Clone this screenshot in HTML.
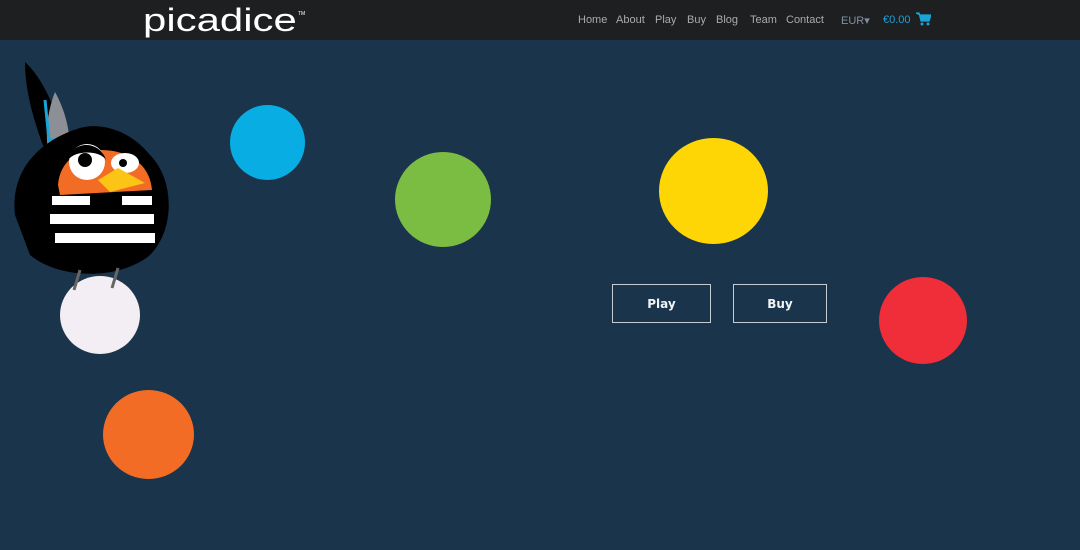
<!DOCTYPE html>
<html><head><meta charset="utf-8"><style>
*{margin:0;padding:0;box-sizing:border-box}
body{width:1080px;height:550px;background:#1a344b;overflow:hidden;position:relative;font-family:"Liberation Sans",sans-serif}
.nav{position:absolute;left:0;top:0;width:1080px;height:40px;background:#1d1f21}
.logo{position:absolute;left:143px;top:0px;color:#fff;font-family:"Liberation Sans",sans-serif;font-size:32px;line-height:40px;transform:scaleX(1.31);transform-origin:left}
.tm{position:absolute;left:298px;top:11px;font-size:5px;color:#fff}
.l{position:absolute;top:14px;font-size:11px;color:#a9abad;white-space:nowrap}
.c{position:absolute;border-radius:50%}
.btn{position:absolute;top:284px;height:39px;border:1.5px solid #c5cdd3;color:#f1f3f5;font-size:12px;font-weight:bold;display:flex;align-items:center;justify-content:center;font-family:"DejaVu Sans",sans-serif}
</style></head><body>
<div class="nav">
<div class="logo">picadice</div><div class="tm">TM</div>
<span class="l" style="left:578px">Home</span>
<span class="l" style="left:616px">About</span>
<span class="l" style="left:655px">Play</span>
<span class="l" style="left:687px">Buy</span>
<span class="l" style="left:716px">Blog</span>
<span class="l" style="left:750px">Team</span>
<span class="l" style="left:786px">Contact</span>
<span class="l" style="left:841px;color:#8290a0">EUR▾</span>
<span class="l" style="left:883px;color:#1aa3d9">€0.00</span>
<svg style="position:absolute;left:916px;top:12px" width="15" height="14" viewBox="0 0 15 14"><path d="M0 1h3l2 8h8l2-6H4z" fill="#1aa3d9" stroke="#1aa3d9" stroke-width="1.2"/><circle cx="6" cy="12" r="1.5" fill="#1aa3d9"/><circle cx="12" cy="12" r="1.5" fill="#1aa3d9"/></svg>
</div>
<div class="c" style="left:230px;top:105px;width:75px;height:75px;background:#08ade3"></div>
<div class="c" style="left:395px;top:152px;width:96px;height:95px;background:#7bbd42"></div>
<div class="c" style="left:659px;top:138px;width:109px;height:106px;background:#fed505"></div>
<div class="c" style="left:879px;top:277px;width:88px;height:87px;background:#ef2e39"></div>
<div class="c" style="left:103px;top:390px;width:91px;height:89px;background:#f36c25"></div>
<div class="c" style="left:60px;top:276px;width:80px;height:78px;background:#f3eef4"></div>
<svg style="position:absolute;left:0;top:55px" width="190" height="240" viewBox="0 55 190 240">
<path d="M25 62 C45 80 62 120 70 170 L55 175 C40 140 25 100 25 62Z" fill="#000"/>
<path d="M55 92 C65 110 70 130 70 150 L48 150 C45 130 48 110 55 92Z" fill="#8c9096"/>
<path d="M45 100 l4 40 l6 0" stroke="#1aa3d9" stroke-width="3" fill="none"/>
<path d="M15 215 C10 170 40 140 80 128 C100 122 130 130 150 155 C175 180 175 230 150 255 C120 280 60 280 30 255 Z" fill="#000"/>
<path d="M58 185 C60 160 80 148 100 150 C130 150 150 165 152 190 L60 195Z" fill="#f36c25"/>
<circle cx="87" cy="162" r="18" fill="#fff"/><circle cx="85" cy="160" r="7" fill="#000"/>
<path d="M68 160 C72 140 100 140 106 160 C100 150 75 150 68 160Z" fill="#000"/>
<ellipse cx="125" cy="163" rx="14" ry="10" fill="#fff"/><circle cx="123" cy="163" r="4" fill="#000"/>
<path d="M98 180 L118 168 L145 183 L110 192 Z" fill="#fcc414"/>
<rect x="52" y="196" width="38" height="9" fill="#fff"/><rect x="122" y="196" width="30" height="9" fill="#fff"/>
<rect x="50" y="214" width="104" height="10" fill="#fff"/>
<rect x="55" y="233" width="100" height="10" fill="#fff"/>
<path d="M80 270 l-6 20 M118 268 l-6 20" stroke="#666" stroke-width="3"/>
</svg>
<div class="btn" style="left:612px;width:99px">Play</div>
<div class="btn" style="left:733px;width:94px">Buy</div>
</body></html>
